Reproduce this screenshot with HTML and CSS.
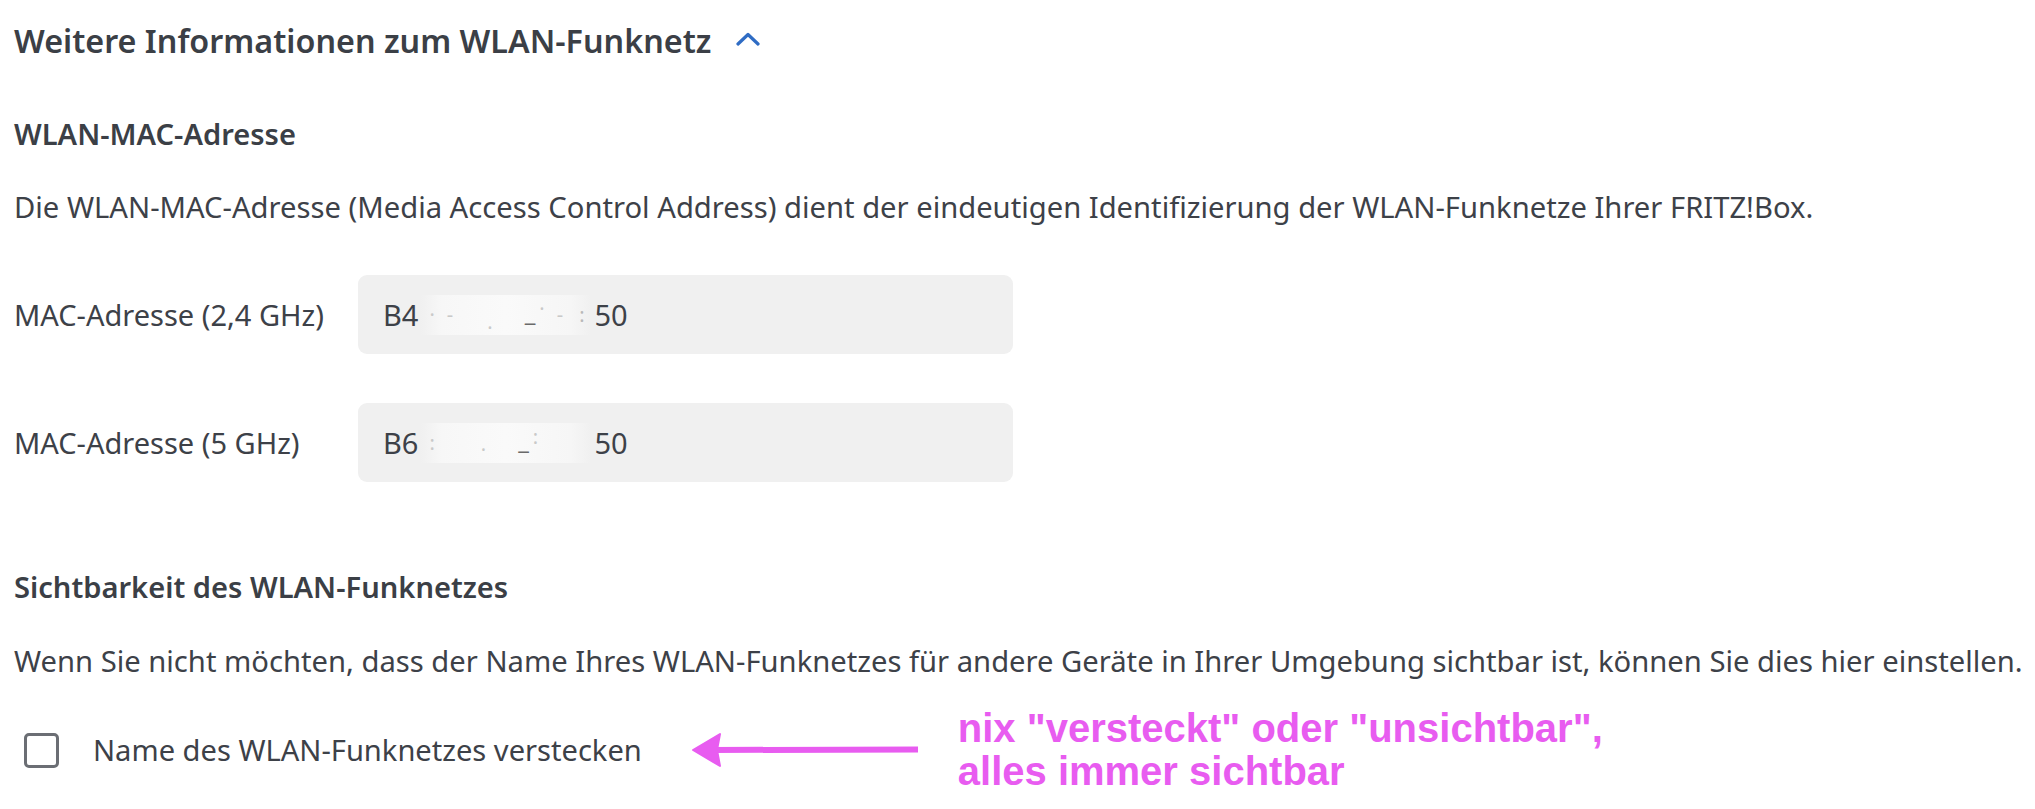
FILE: index.html
```html
<!DOCTYPE html>
<html lang="de">
<head>
<meta charset="utf-8">
<title>WLAN-Funknetz</title>
<link rel="stylesheet" href="styles.css">
</head>
<body>
<main class="page">
  <h1 class="title">
    <span>Weitere Informationen zum WLAN-Funknetz</span>
    <svg class="chevron" width="24" height="14" viewBox="0 0 24 14" aria-hidden="true">
      <polyline points="2,12 12,2.5 22,12" fill="none" stroke="#2f6cc4" stroke-width="3.2" stroke-linecap="round" stroke-linejoin="round"/>
    </svg>
  </h1>

  <h2 class="section-title first">WLAN-MAC-Adresse</h2>
  <p class="desc">Die WLAN-MAC-Adresse (Media Access Control Address) dient der eindeutigen Identifizierung der WLAN-Funknetze Ihrer FRITZ!Box.</p>

  <div class="field-row">
    <span class="field-label">MAC-Adresse (2,4 GHz)</span>
    <div class="field-box"><span>B4</span><span class="redact"><i class="d d1">·</i><i class="d d2">-</i><i class="d d3">.</i><i class="u">_</i><i class="d d4">·</i><i class="d d5">-</i><i class="d d6">:</i></span><span>50</span></div>
  </div>
  <div class="field-row second">
    <span class="field-label">MAC-Adresse (5 GHz)</span>
    <div class="field-box"><span>B6</span><span class="redact"><i class="d d1">:</i><i class="d d2"> </i><i class="d d3">·</i><i class="u">_</i><i class="d d4">:</i><i class="d d5"> </i><i class="d d6"> </i></span><span>50</span></div>
  </div>

  <h2 class="section-title second-title">Sichtbarkeit des WLAN-Funknetzes</h2>
  <p class="desc desc2">Wenn Sie nicht möchten, dass der Name Ihres WLAN-Funknetzes für andere Geräte in Ihrer Umgebung sichtbar ist, können Sie dies hier einstellen.</p>

  <div class="check-row">
    <input type="checkbox" class="check" id="hide">
    <label for="hide" class="check-label">Name des WLAN-Funknetzes verstecken</label>
    <svg class="arrow" width="228" height="38" viewBox="0 0 228 38" aria-hidden="true">
      <path d="M1,19 L28,3 L25,19 L28,35 Z" fill="#e85cf0" stroke="#e85cf0" stroke-width="2" stroke-linejoin="round"/>
      <path d="M20,16 L226,15.5 L226,21.5 L20,22 Z" fill="#e85cf0"/>
    </svg>
    <div class="note">nix "versteckt" oder "unsichtbar",<br>alles immer sichtbar</div>
  </div>
</main>
</body>
</html>
```
FILE: styles.css
```css
html, body {
  margin: 0;
  padding: 0;
  background: #ffffff;
}
body {
  font-family: "Noto Sans", "Open Sans", sans-serif;
  color: #3d4148;
}
.page {
  padding: 18px 14px 0 14px;
}
.title {
  margin: 0;
  display: flex;
  align-items: center;
  gap: 25px;
  font-size: 32.3px;
  line-height: 44px;
  font-weight: 600;
  color: #3b3f46;
}
.chevron {
  display: block;
  margin-top: -2px;
}
.section-title {
  margin: 0;
  font-size: 29.1px;
  line-height: 40px;
  font-weight: 600;
  color: #3b3f46;
}
.section-title.first {
  margin-top: 52px;
}
.section-title.second-title {
  margin-top: 85px;
}
.desc {
  margin: 33px 0 0 0;
  font-size: 29.2px;
  line-height: 40px;
  white-space: nowrap;
}
.desc2 {
  margin-top: 34px;
}
.field-row {
  display: grid;
  grid-template-columns: 344px 655px;
  align-items: center;
  margin-top: 48px;
}
.field-row.second {
  margin-top: 49px;
}
.field-label {
  font-size: 29px;
  line-height: 40px;
}
.field-box {
  height: 79px;
  background: #f0f0f0;
  border-radius: 9px;
  display: flex;
  align-items: center;
  padding-left: 25px;
  font-size: 29px;
  line-height: 40px;
}
.redact {
  display: inline-flex;
  align-items: center;
  width: 170px;
  height: 40px;
  margin: 0 3px;
  background: linear-gradient(90deg, #f0f0f0 0%, #f7f7f7 12%, #fafafa 50%, #f6f6f6 88%, #f0f0f0 100%);
}
.redact i {
  font-style: normal;
  font-size: 20px;
  color: #c9c9c9;
}
.redact .d1 { margin-left: 8px; }
.redact .d2 { margin-left: 12px; }
.redact .d3 { margin-left: 34px; margin-top: 14px; }
.redact .u { margin-left: 32px; color: #6a6a6a; font-size: 24px; margin-top: -6px; }
.redact .d4 { margin-left: 4px; margin-top: -12px; }
.redact .d5 { margin-left: 12px; }
.redact .d6 { margin-left: 16px; color: #b9b9b9; }
.check-row {
  display: flex;
  align-items: center;
  margin-top: 26px;
}
.check {
  appearance: none;
  -webkit-appearance: none;
  margin: 0 0 0 10px;
  width: 35px;
  height: 35px;
  border: 3px solid #6b6e74;
  border-radius: 5px;
  background: #ffffff;
  flex: none;
}
.check-label {
  margin-left: 34px;
  font-size: 29.1px;
  line-height: 40px;
}
.arrow {
  display: block;
  margin-left: 50px;
  flex: none;
}
.note {
  margin-left: 38px;
  font-family: "Liberation Sans", Arial, sans-serif;
  font-weight: 700;
  font-size: 40px;
  line-height: 43px;
  color: #e85cf0;
  white-space: nowrap;
}
```
